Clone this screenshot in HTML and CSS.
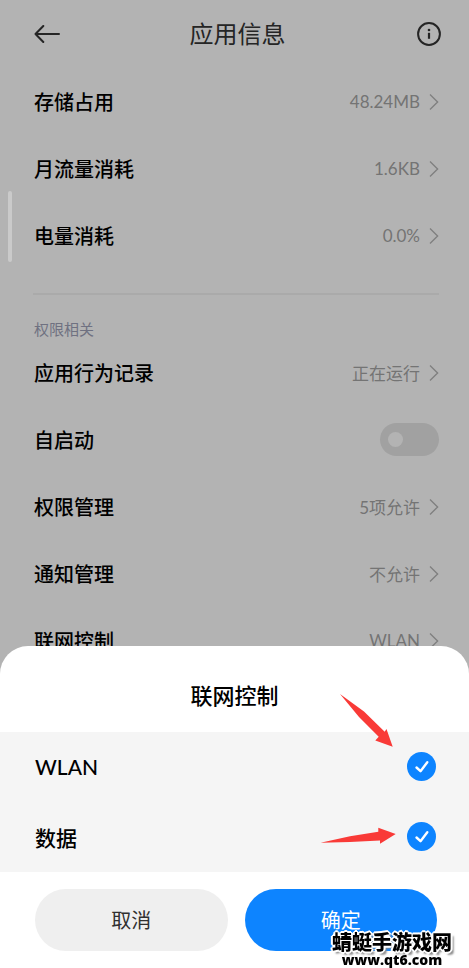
FILE: index.html
```html
<!DOCTYPE html>
<html lang="zh-CN">
<head>
<meta charset="utf-8">
<meta name="viewport" content="width=device-width, initial-scale=1">
<title>应用信息</title>
<link rel="stylesheet" href="styles.css">
</head>
<body>
<svg class="symbols" aria-hidden="true">
  <symbol id="chevron" viewBox="0 0 10 18"><path d="M1 1.500 8.600 9 1 16.500" fill="none" stroke="currentColor" stroke-width="1.400"/></symbol>
</svg>
<main class="page">
  <header class="topbar">
    <button class="icon-button" type="button" aria-label="返回">
      <svg width="26" height="18" viewBox="0 0 26 18"><path d="M25 9H1.500M9.300 1 1.500 9l7.800 8" fill="none" stroke="currentColor" stroke-width="2" stroke-linecap="round" stroke-linejoin="round"/></svg>
    </button>
    <h1 class="topbar-title">应用信息</h1>
    <button class="icon-button" type="button" aria-label="详情">
      <svg width="24" height="24" viewBox="0 0 24 24"><circle cx="12" cy="12" r="10.900" fill="none" stroke="currentColor" stroke-width="2"/><circle cx="12" cy="8" r="1.300" fill="currentColor"/><path d="M12 10.800v6" stroke="currentColor" stroke-width="2.200"/></svg>
    </button>
  </header>
  <section class="group">
    <a class="row" href="#"><span>存储占用</span><span class="value">48.24MB</span><svg class="chevron"><use href="#chevron"/></svg></a>
    <a class="row" href="#"><span>月流量消耗</span><span class="value">1.6KB</span><svg class="chevron"><use href="#chevron"/></svg></a>
    <a class="row" href="#"><span>电量消耗</span><span class="value">0.0%</span><svg class="chevron"><use href="#chevron"/></svg></a>
  </section>
  <hr class="divider">
  <section class="group">
    <h2 class="group-title">权限相关</h2>
    <a class="row" href="#"><span>应用行为记录</span><span class="value">正在运行</span><svg class="chevron"><use href="#chevron"/></svg></a>
    <label class="row"><span>自启动</span><input class="switch" type="checkbox" role="switch"></label>
    <a class="row" href="#"><span>权限管理</span><span class="value">5项允许</span><svg class="chevron"><use href="#chevron"/></svg></a>
    <a class="row" href="#"><span>通知管理</span><span class="value">不允许</span><svg class="chevron"><use href="#chevron"/></svg></a>
    <a class="row" href="#"><span>联网控制</span><span class="value">WLAN</span><svg class="chevron"><use href="#chevron"/></svg></a>
  </section>
  <div class="scroll-thumb"></div>
</main>
<section class="sheet" role="dialog" aria-labelledby="sheet-title">
  <h2 class="sheet-title" id="sheet-title">联网控制</h2>
  <div class="options">
    <label class="option"><span>WLAN</span>
      <span class="check"><input type="checkbox" checked><svg viewBox="0 0 29 29"><path d="m9.500 15.500 4 3.700L20.300 10.300" fill="none" stroke="#fff" stroke-width="2.400" stroke-linecap="round" stroke-linejoin="round"/></svg></span>
    </label>
    <label class="option"><span>数据</span>
      <span class="check"><input type="checkbox" checked><svg viewBox="0 0 29 29"><path d="m9.500 15.500 4 3.700L20.300 10.300" fill="none" stroke="#fff" stroke-width="2.400" stroke-linecap="round" stroke-linejoin="round"/></svg></span>
    </label>
    <svg class="arrows" width="80" height="156" viewBox="318 690 80 156" aria-hidden="true">
      <path d="M340 694 364 711.500 384.700 731.700 386.500 729 392.700 746.700 375.300 740.500 378.700 736.700 359 717Z" fill="#f93a37"/>
      <path d="M320.500 842.800 350 836.300 378.300 831.700 378.300 827.800 395.700 834 380 843.700 380 840.600 350 841.900Z" fill="#f93a37"/>
    </svg>
  </div>
  <div class="actions">
    <button class="button" type="button">取消</button>
    <button class="button button-primary" type="button">确定</button>
  </div>
  <div class="watermark"><span class="watermark-name">蜻蜓手游戏网</span><span class="watermark-url">www.qt6.com</span></div>
</section>
</body>
</html>
```
FILE: styles.css
```css
* {
  box-sizing: border-box;
}

body {
  margin: 0;
  background: #b3b3b3;
  color: #000;
  font-family: Lato, "Noto Sans CJK SC", sans-serif;
}

h1,
h2 {
  margin: 0;
}

button,
input {
  margin: 0;
  border: 0;
  font-family: inherit;
}

.symbols {
  position: absolute;
  width: 0;
  height: 0;
}

.page {
  position: relative;
  height: 100vh;
  overflow: hidden;
}

.topbar {
  display: grid;
  grid-template-columns: 1fr auto 1fr;
  align-items: center;
  height: 68px;
  padding: 0 28px 0 34px;
  color: #252525;
}

.topbar-title {
  font-size: 24px;
  font-weight: 400;
  line-height: 36px;
}

.icon-button {
  display: flex;
  padding: 0;
  background: none;
  color: inherit;
}

.icon-button:last-child {
  justify-self: end;
}

.group {
  padding: 0 30px 0 34px;
}

.row {
  display: flex;
  align-items: center;
  height: 67px;
  color: #000;
  font-size: 20px;
  font-weight: 500;
  text-decoration: none;
}

.value {
  margin-left: auto;
  color: #747474;
  font-size: 17px;
  font-weight: 400;
}

.chevron {
  width: 10px;
  height: 18px;
  margin-left: 9px;
  color: #808080;
}

.divider {
  height: 2px;
  margin: 24px 30px 24px 33px;
  border: 0;
  background: #aaa;
}

.group-title {
  color: #6f7181;
  font-size: 15px;
  font-weight: 400;
  line-height: 20px;
}

.switch {
  display: flex;
  align-items: center;
  width: 59px;
  height: 33px;
  margin-left: auto;
  padding: 0 8px;
  border-radius: 17px;
  background: #a1a1a1;
  appearance: none;
}

.switch::before {
  width: 15px;
  height: 15px;
  border-radius: 50%;
  background: #b3b3b3;
  content: "";
}

.switch:checked {
  justify-content: flex-end;
}

.scroll-thumb {
  position: absolute;
  top: 191px;
  left: 8px;
  width: 4px;
  height: 71px;
  border-radius: 2px;
  background: #cacaca;
}

.sheet {
  position: fixed;
  right: 0;
  bottom: 0;
  left: 0;
  border-radius: 28px 28px 0 0;
  background: #fff;
}

.sheet-title {
  padding: 33px 0 20px;
  font-size: 22px;
  font-weight: 500;
  line-height: 33px;
  text-align: center;
}

.options {
  position: relative;
  background: #f5f5f5;
}

.option {
  display: flex;
  align-items: center;
  justify-content: space-between;
  height: 70px;
  padding: 0 33px 1px 35px;
  font-size: 21px;
  font-weight: 500;
}

.check {
  display: grid;
  width: 29px;
  height: 29px;
}

.check input,
.check svg {
  grid-area: 1 / 1;
  width: 29px;
  height: 29px;
}

.check input {
  border-radius: 50%;
  background: #d8d8d8;
  appearance: none;
}

.check input:checked {
  background: #0d84ff;
}

.arrows {
  position: absolute;
  top: -42px;
  right: 71px;
  pointer-events: none;
}

.actions {
  display: flex;
  gap: 17px;
  padding: 17px 32px 17px 35px;
}

.button {
  flex: 1;
  height: 62px;
  padding: 0 0 2px;
  border-radius: 31px;
  background: #efefef;
  color: #303030;
  font-size: 20px;
}

.button-primary {
  background: #0d84ff;
  color: #fff;
}

.watermark {
  position: absolute;
  right: 17px;
  bottom: 0;
  display: grid;
  justify-items: center;
  color: #000;
  pointer-events: none;
}

.watermark-name {
  font-size: 20px;
  font-weight: 900;
  line-height: 18px;
  text-shadow: 2px 0 #fff, -2px 0 #fff, 0 2px #fff, 0 -2px #fff, 1px 1px #fff, -1px 1px #fff, 1px -1px #fff, -1px -1px #fff, 3px 3px 2px #888;
}

.watermark-url {
  font-family: "Open Sans", sans-serif;
  font-size: 14px;
  font-weight: 800;
  line-height: 17px;
}
```
